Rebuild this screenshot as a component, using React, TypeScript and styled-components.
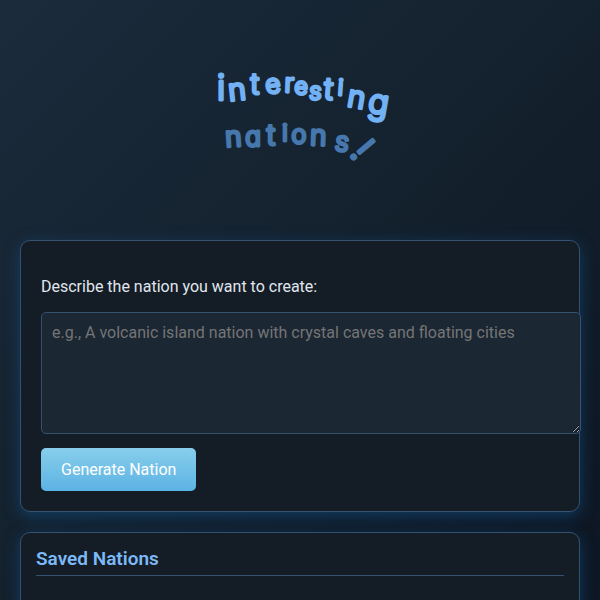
import React from "react";
import styled, { createGlobalStyle } from "styled-components";

const GlobalStyle = createGlobalStyle`
  body {
    margin: 0;
    color: #e0e6ed;
    font-family: Roboto, "Liberation Sans", sans-serif;
    font-size: 16px;
    line-height: 19px;
    background: linear-gradient(135deg, #1b2b3b 0%, #13202c 50%, #0c1420 100%);
  }
`;

const Page = styled.main`
  display: flex;
  flex-direction: column;
  gap: 20px;
  min-height: 100vh;
  padding: 20px;
  box-sizing: border-box;
`;

const Header = styled.header`
  display: flex;
  justify-content: center;
`;

const Logo = styled.svg`
  width: 200px;
  height: 200px;
`;

const LogoLine = styled.text<{ $color: string }>`
  fill: ${(p) => p.$color};
  stroke: ${(p) => p.$color};
  stroke-width: 3px;
  stroke-linejoin: round;
  font-family: Inter, Roboto, sans-serif;
  font-weight: 300;
  font-feature-settings: "cv11";
  text-anchor: middle;
`;

const Panel = styled.section<{ $inset: number }>`
  padding: ${(p) => p.$inset}px;
  background: #141d26;
  border: 1px solid #34516f;
  border-radius: 10px;
  box-shadow: 0 4px 15px rgba(14, 84, 144, 0.55);
`;

const Form = styled.form`
  display: flex;
  flex-direction: column;
  align-items: flex-start;
  padding-top: 16px;
`;

const Label = styled.label`
  margin-bottom: 16px;
`;

const Description = styled.textarea`
  width: 100%;
  height: 100px;
  margin: 0 0 14px;
  padding: 10px;
  color: #e0e6ed;
  background: #1b2733;
  border: 1px solid #34516f;
  border-radius: 5px;
  font: inherit;
  resize: vertical;

  &::placeholder {
    color: #757575;
  }
`;

const SubmitButton = styled.button`
  padding: 12px 20px;
  color: #fff;
  background: linear-gradient(#87ceeb, #5cb3e4);
  border: 0;
  border-radius: 5px;
  font: inherit;
  cursor: pointer;
`;

const Title = styled.h2`
  margin: 0;
  padding-bottom: 5px;
  color: #7db8f7;
  border-bottom: 1px solid #34516f;
  font-size: 19px;
  font-weight: 600;
  line-height: 22px;
`;

const NationList = styled.div`
  min-height: 120px;
`;

type Letter = { char: string; x: number; y: number; size: number; turn: number };

const topLine: Letter[] = [
  { char: "i", x: 21, y: 80, size: 35, turn: 0 },
  { char: "n", x: 38, y: 81, size: 30, turn: -6 },
  { char: "t", x: 55, y: 74, size: 28, turn: 0 },
  { char: "e", x: 74, y: 74, size: 26, turn: -8 },
  { char: "r", x: 89, y: 72, size: 26, turn: 2 },
  { char: "e", x: 101, y: 74, size: 23, turn: 2 },
  { char: "s", x: 115, y: 79, size: 24, turn: 4 },
  { char: "t", x: 128, y: 79, size: 30, turn: 4 },
  { char: "i", x: 140, y: 75, size: 22, turn: 4 },
  { char: "n", x: 155, y: 86, size: 30, turn: 10 },
  { char: "g", x: 177, y: 92, size: 34, turn: 10 },
];

const bottomLine: Letter[] = [
  { char: "n", x: 34, y: 127, size: 28, turn: -4 },
  { char: "a", x: 53, y: 126, size: 26, turn: 0 },
  { char: "t", x: 71, y: 125, size: 28, turn: 0 },
  { char: "i", x: 85, y: 121, size: 23, turn: 0 },
  { char: "o", x: 99, y: 123, size: 25, turn: 0 },
  { char: "n", x: 118, y: 125, size: 28, turn: 2 },
  { char: "s", x: 141, y: 130, size: 27, turn: 8 },
  { char: "!", x: 154, y: 134, size: 38, turn: 50 },
];

const Letters = ({ letters }: { letters: Letter[] }) => (
  <>
    {letters.map((l, i) => (
      <tspan key={i} x={l.x} y={l.y} fontSize={l.size} rotate={l.turn}>
        {l.char}
      </tspan>
    ))}
  </>
);

export default function App() {
  return (
    <>
      <GlobalStyle />
      <Page>
        <Header>
          <Logo viewBox="0 0 200 200" role="img" aria-label="interesting nations!">
            <LogoLine $color="#73b1f5">
              <Letters letters={topLine} />
            </LogoLine>
            <LogoLine $color="#4678ae">
              <Letters letters={bottomLine} />
            </LogoLine>
          </Logo>
        </Header>
        <Panel $inset={20}>
          <Form onSubmit={(e) => e.preventDefault()}>
            <Label htmlFor="description">Describe the nation you want to create:</Label>
            <Description
              id="description"
              placeholder="e.g., A volcanic island nation with crystal caves and floating cities"
            />
            <SubmitButton type="submit">Generate Nation</SubmitButton>
          </Form>
        </Panel>
        <Panel $inset={15}>
          <Title>Saved Nations</Title>
          <NationList />
        </Panel>
      </Page>
    </>
  );
}
